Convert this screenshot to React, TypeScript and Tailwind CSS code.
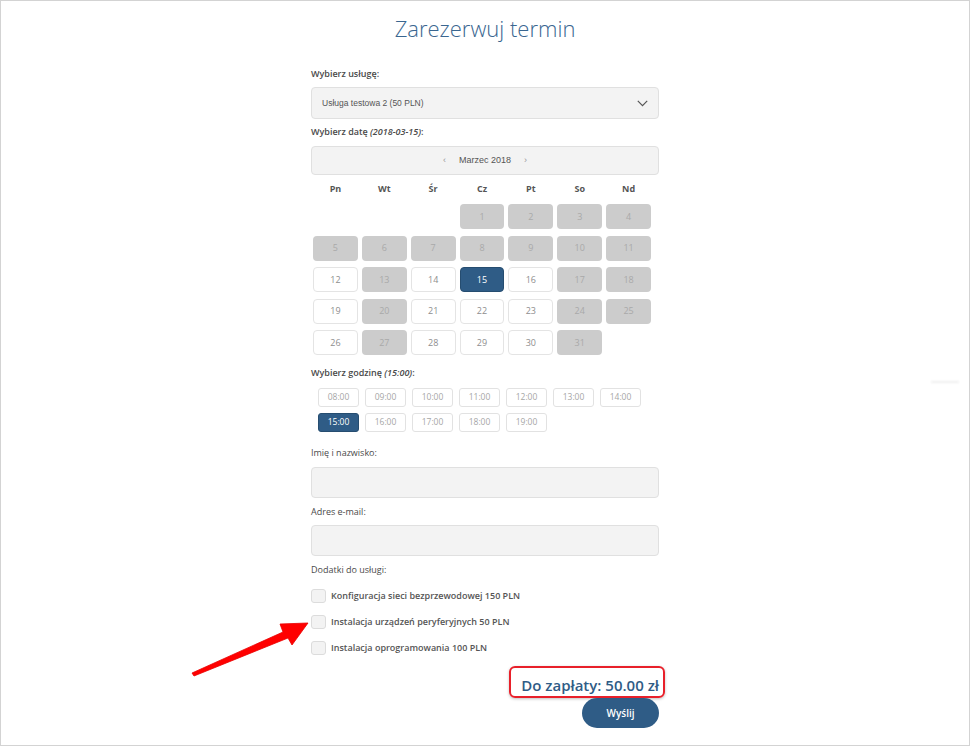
import React from "react";

const days = ["Pn", "Wt", "Śr", "Cz", "Pt", "So", "Nd"];
const disabled = [1, 2, 3, 4, 5, 6, 7, 8, 9, 10, 11, 13, 17, 18, 20, 24, 25, 27, 31];
const hours = ["08:00", "09:00", "10:00", "11:00", "12:00", "13:00", "14:00", "15:00", "16:00", "17:00", "18:00", "19:00"];
const addons = [
  "Konfiguracja sieci bezprzewodowej 150 PLN",
  "Instalacja urządzeń peryferyjnych 50 PLN",
  "Instalacja oprogramowania 100 PLN",
];

function Label({ children, bold }: { children: React.ReactNode; bold?: boolean }) {
  return (
    <div className={`text-[9px] leading-[13px] text-[#4a4a4a] ${bold ? "font-semibold" : "font-normal"}`}>
      {children}
    </div>
  );
}

function DayCell({ d }: { d: number }) {
  if (d === 15) {
    return (
      <div className="h-[25px] rounded-[4px] bg-[#2f5c86] border border-[#264d70] flex items-center justify-center text-[9px] text-white">
        {d}
      </div>
    );
  }
  if (disabled.includes(d)) {
    return (
      <div className="h-[25px] rounded-[4px] bg-[#cccccc] flex items-center justify-center text-[9px] text-[#a9a9a9]">
        {d}
      </div>
    );
  }
  return (
    <div className="h-[25px] rounded-[4px] bg-white border border-[#e4e4e4] flex items-center justify-center text-[9px] text-[#8e8e8e]">
      {d}
    </div>
  );
}

export default function App() {
  const cells: (number | null)[] = [null, null, null];
  for (let i = 1; i <= 31; i++) cells.push(i);

  return (
    <div
      className="relative w-[970px] h-[746px] bg-white border border-[#d3d3d3] overflow-hidden"
      style={{ fontFamily: '"Open Sans", "Noto Sans", sans-serif' }}
    >
      <h1 className="mt-[12px] text-center text-[22px] leading-[30px] font-light text-[#3a6690]">Zarezerwuj termin</h1>

      <div className="flex justify-center">
        <div className="w-[348px] flex flex-col">
          <div className="mt-[24px]">
            <Label bold>Wybierz usługę:</Label>
          </div>
          <div className="mt-[7px] h-[32px] rounded-[4px] bg-[#f3f3f3] border border-[#e0e0e0] flex items-center justify-between pl-[10px] pr-[10px]">
            <span className="text-[8.5px] text-[#555]" style={{ fontFamily: '"Liberation Sans", Arial, sans-serif' }}>
              Usługa testowa 2 (50 PLN)
            </span>
            <svg width="11" height="7" viewBox="0 0 11 7" fill="none">
              <polyline points="0.8,0.8 5.5,5.6 10.2,0.8" stroke="#555" strokeWidth="1.2" />
            </svg>
          </div>

          <div className="mt-[6px]">
            <Label bold>
              Wybierz datę <i>(2018-03-15)</i>:
            </Label>
          </div>
          <div
            className="mt-[8px] h-[29px] rounded-[4px] bg-[#f3f3f3] border border-[#e0e0e0] flex items-center justify-center gap-[13px] text-[9px] text-[#555]"
            style={{ fontFamily: '"Liberation Sans", Arial, sans-serif' }}
          >
            <span className="text-[#999]">‹</span>
            <span>Marzec 2018</span>
            <span className="text-[#999]">›</span>
          </div>

          <div className="ml-[2px] w-[338px]">
            <div className="mt-[7px] grid grid-cols-7 gap-x-[4px]">
              {days.map((d) => (
                <div key={d} className="text-center text-[9px] leading-[13px] font-bold text-[#555]">
                  {d}
                </div>
              ))}
            </div>
            <div className="mt-[9px] grid grid-cols-7 gap-x-[4px] gap-y-[6.5px]">
              {cells.map((d, i) => (d === null ? <div key={"e" + i} /> : <DayCell key={d} d={d} />))}
            </div>
          </div>

          <div className="mt-[11px]">
            <Label bold>
              Wybierz godzinę <i>(15:00)</i>:
            </Label>
          </div>
          <div className="mt-[9px] ml-[7px] w-[324px] flex flex-wrap gap-[6px]">
            {hours.map((h) =>
              h === "15:00" ? (
                <div
                  key={h}
                  className="w-[41px] h-[19px] rounded-[3px] bg-[#2f5c86] border border-[#264d70] flex items-center justify-center text-[8.5px] text-white"
                >
                  {h}
                </div>
              ) : (
                <div
                  key={h}
                  className="w-[41px] h-[19px] rounded-[3px] bg-white border border-[#e2e2e2] flex items-center justify-center text-[8.5px] text-[#a6a6a6]"
                >
                  {h}
                </div>
              )
            )}
          </div>

          <div className="mt-[14px]">
            <Label>Imię i nazwisko:</Label>
          </div>
          <div className="mt-[8px] h-[31px] rounded-[4px] bg-[#f3f3f3] border border-[#e0e0e0]" />

          <div className="mt-[7px]">
            <Label>Adres e-mail:</Label>
          </div>
          <div className="mt-[7px] h-[31px] rounded-[4px] bg-[#f3f3f3] border border-[#e0e0e0]" />

          <div className="mt-[7px]">
            <Label>Dodatki do usługi:</Label>
          </div>
          <div className="mt-[13px] flex flex-col gap-[12px]">
            {addons.map((a) => (
              <div key={a} className="flex items-center gap-[5px] h-[14px]">
                <div className="w-[15px] h-[14px] rounded-[3px] bg-[#f3f3f3] border border-[#dcdcdc]" />
                <span className="text-[9px] font-semibold text-[#555]">{a}</span>
              </div>
            ))}
          </div>

          <div className="mt-[11px] flex justify-end">
            <div className="mr-[-6px] border-2 border-[#e8202a] rounded-[6px] pl-[10px] pr-[4px] pt-[6px] shadow-[0_1px_3px_rgba(0,0,0,0.25)]">
              <div className="text-[15px] leading-[22px] font-semibold text-[#2f5c86]">Do zapłaty: 50.00 zł</div>
            </div>
          </div>
          <div className="flex justify-end">
            <button className="w-[77px] h-[30px] rounded-full bg-[#2f5c86] text-white text-[10px] font-semibold">
              Wyślij
            </button>
          </div>
        </div>
      </div>

      <svg className="absolute left-0 top-0 pointer-events-none" width="970" height="746">
        <polygon
          points="191,672 282,631 279,623 307,622 291,644 287,637 193,675"
          fill="#ff0000"
          stroke="#e80000"
          strokeWidth="0.8"
          strokeLinejoin="round"
        />
      </svg>
      <div className="absolute left-[930px] top-[380px] w-[28px] h-[2px] bg-[#efefef] blur-[1px]" />
    </div>
  );
}
